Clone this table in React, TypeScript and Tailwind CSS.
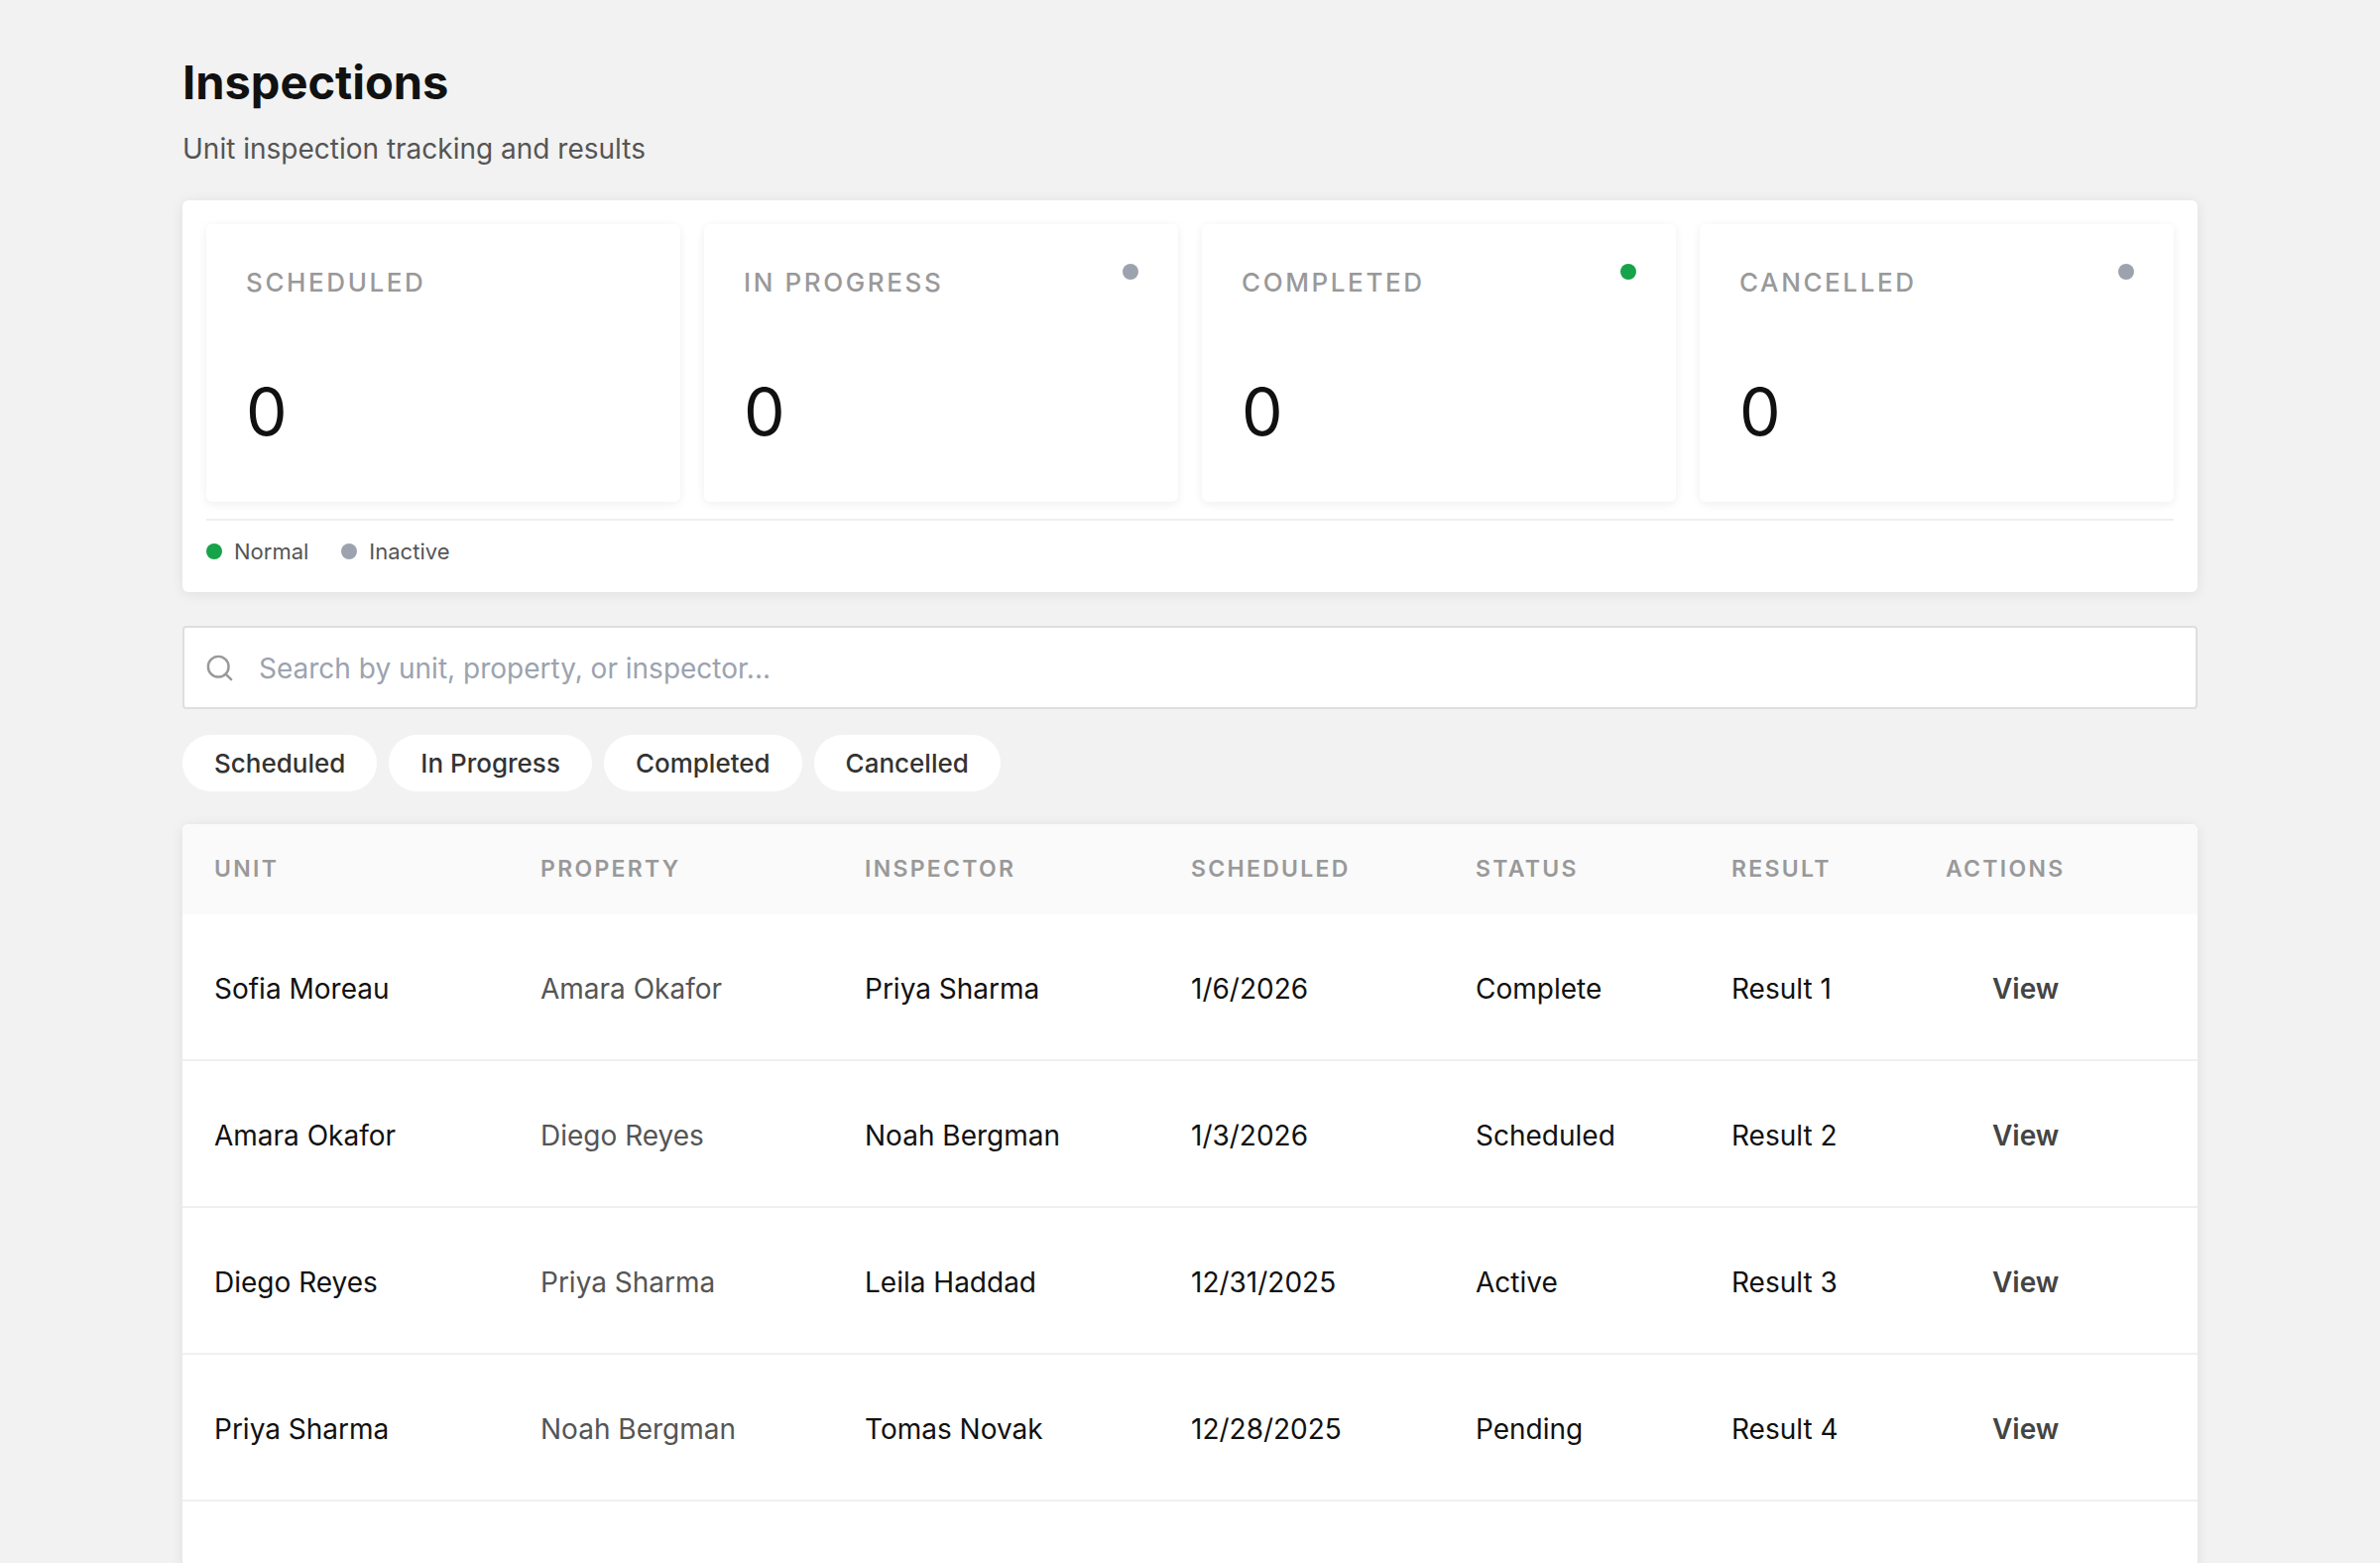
import React from 'react';
import { Search } from 'lucide-react';

type Stat = { label: string; value: number; dot?: string };

const stats: Stat[] = [
  { label: 'Scheduled', value: 0 },
  { label: 'In Progress', value: 0, dot: 'bg-[#9ca3af]' },
  { label: 'Completed', value: 0, dot: 'bg-[#16a34a]' },
  { label: 'Cancelled', value: 0, dot: 'bg-[#9ca3af]' },
];

const filters = ['Scheduled', 'In Progress', 'Completed', 'Cancelled'];

const columns = ['Unit', 'Property', 'Inspector', 'Scheduled', 'Status', 'Result', 'Actions'];

const rows = [
  ['Sofia Moreau', 'Amara Okafor', 'Priya Sharma', '1/6/2026', 'Complete', 'Result 1'],
  ['Amara Okafor', 'Diego Reyes', 'Noah Bergman', '1/3/2026', 'Scheduled', 'Result 2'],
  ['Diego Reyes', 'Priya Sharma', 'Leila Haddad', '12/31/2025', 'Active', 'Result 3'],
  ['Priya Sharma', 'Noah Bergman', 'Tomas Novak', '12/28/2025', 'Pending', 'Result 4'],
];

const gridCols = 'grid grid-cols-[329px_327px_329px_287px_258px_216px_286px]';

const StatCard: React.FC<{ stat: Stat }> = ({ stat }) => (
  <div className="relative bg-white rounded-[6px] shadow-[0_2px_10px_rgba(0,0,0,0.07)] px-[40px] pt-[39px] pb-[58px]">
    {stat.dot && (
      <span className={`absolute top-[40px] right-[40px] h-[16px] w-[16px] rounded-full ${stat.dot}`} />
    )}
    <div className="text-[26px] leading-[39px] font-medium uppercase tracking-[0.1em] text-[#999]">
      {stat.label}
    </div>
    <div className="mt-[78px] text-[66px] leading-[66px] text-[#111]">{stat.value}</div>
  </div>
);

const App: React.FC = () => {
  return (
    <div className="min-h-screen bg-[#f2f2f2] font-['Inter',sans-serif] text-[#111]">
      <div className="mx-[184px] pt-[54px]">
        {/* Header */}
        <h1 className="text-[47px] leading-[58px] font-bold text-[#111]">Inspections</h1>
        <p className="mt-[18px] text-[28px] leading-[40px] text-[#555]">
          Unit inspection tracking and results
        </p>

        {/* Stats */}
        <section className="mt-[32px] bg-white rounded-[6px] shadow-[0_2px_14px_rgba(0,0,0,0.08)] px-[24px] pt-[24px] pb-[25px]">
          <div className="grid grid-cols-4 gap-[24px]">
            {stats.map((s) => (
              <StatCard key={s.label} stat={s} />
            ))}
          </div>
          <div className="mt-[17px] h-[2px] bg-[#efefef]" />
          <div className="pt-[15px] flex items-center gap-[33px] text-[22px] leading-[32px] text-[#555]">
            <div className="flex items-center gap-[12px]">
              <span className="h-[16px] w-[16px] rounded-full bg-[#16a34a]" />
              Normal
            </div>
            <div className="flex items-center gap-[12px]">
              <span className="h-[16px] w-[16px] rounded-full bg-[#9ca3af]" />
              Inactive
            </div>
          </div>
        </section>

        {/* Search */}
        <div className="mt-[34px] h-[84px] bg-white border-2 border-[#dedede] rounded-[4px] flex items-center pl-[20px] gap-[24px]">
          <Search size={31} strokeWidth={1.9} className="text-[#999] shrink-0" />
          <input
            type="text"
            placeholder="Search by unit, property, or inspector..."
            className="flex-1 bg-transparent outline-none text-[28px] text-[#111] placeholder:text-[#9ca3af] mt-[2px]"
          />
        </div>

        {/* Filters */}
        <div className="mt-[26px] flex gap-[12px]">
          {filters.map((f) => (
            <button
              key={f}
              className="h-[57px] px-[32px] rounded-full bg-white text-[26px] font-medium text-[#333]"
            >
              {f}
            </button>
          ))}
        </div>

        {/* Table */}
        <div className="mt-[33px] bg-white rounded-t-[6px] shadow-[0_2px_14px_rgba(0,0,0,0.08)] overflow-hidden">
          <div className={`${gridCols} h-[91px] items-center bg-[#fafafa]`}>
            {columns.map((c) => (
              <div key={c} className="pl-[32px] text-[23px] font-semibold uppercase tracking-[0.1em] text-[#999]">
                {c}
              </div>
            ))}
          </div>
          {rows.map((r) => (
            <div key={r[0]} className={`${gridCols} h-[148px] items-center border-b-2 border-[#f0f0f0] text-[28px] pt-[3px]`}>
              {r.map((cell, i) => (
                <div key={i} className={`pl-[32px] ${i === 1 ? 'text-[#555]' : 'text-[#111]'}`}>
                  {cell}
                </div>
              ))}
              <div className="pl-[32px]">
                <button className="ml-[23px] px-[24px] py-[10px] font-semibold text-[#444]">View</button>
              </div>
            </div>
          ))}
          <div className="h-[120px]" />
        </div>
      </div>
    </div>
  );
};

export default App;
